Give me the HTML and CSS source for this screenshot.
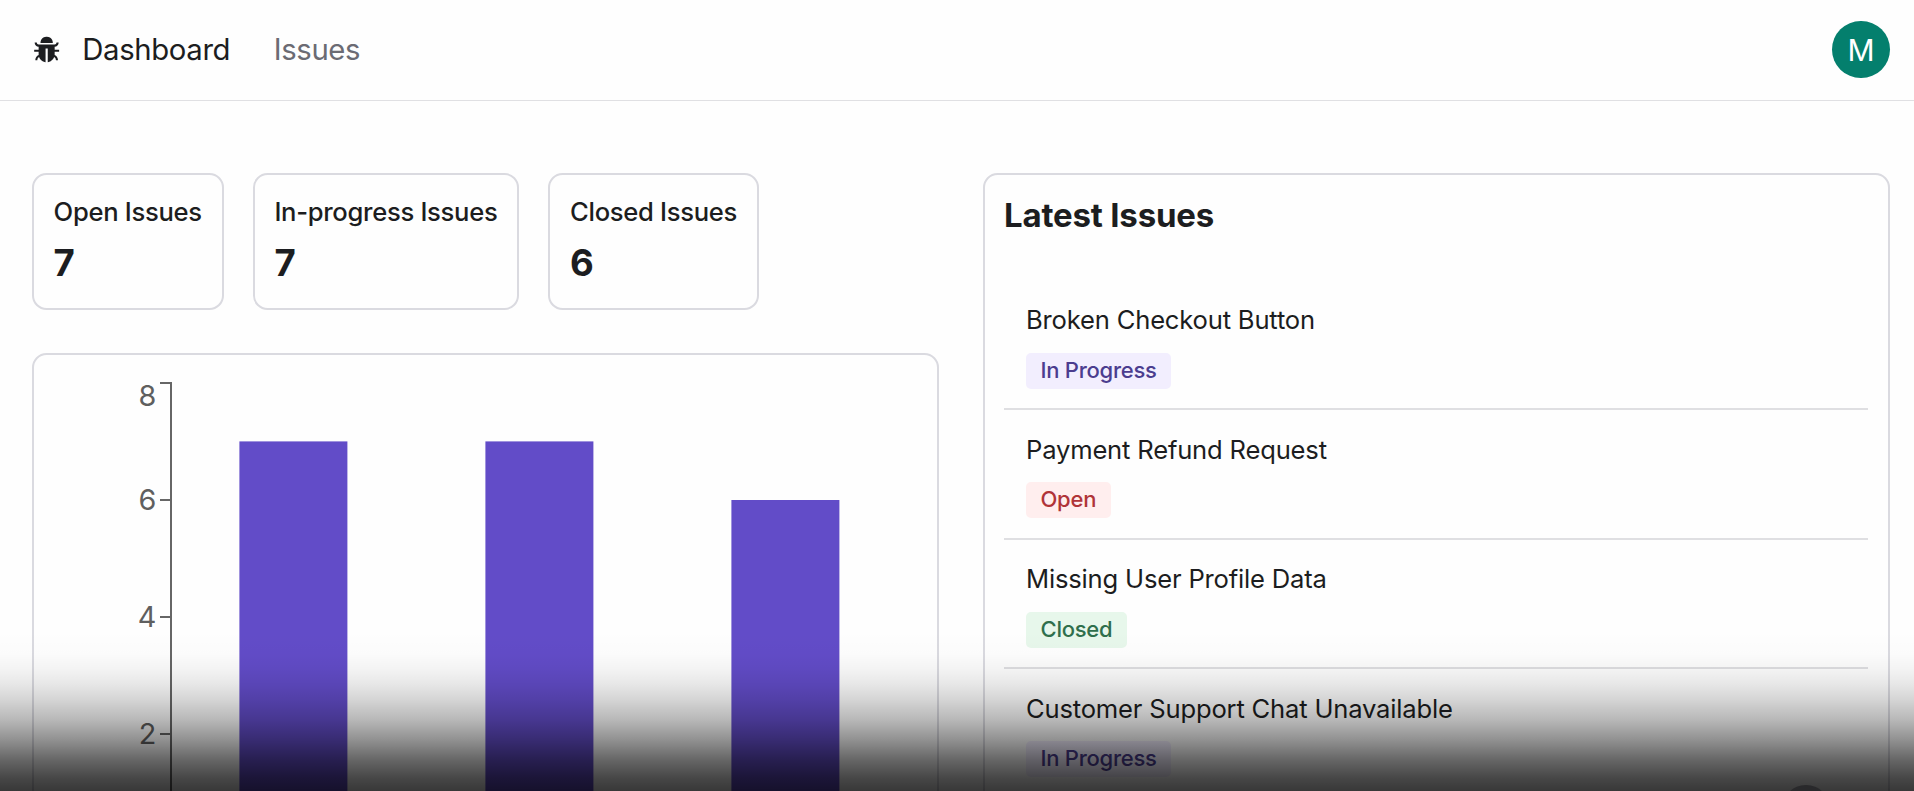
FILE: index.html
```html
<!DOCTYPE html>
<html lang="en">
<head>
<meta charset="utf-8">
<title>Dashboard</title>
<link rel="stylesheet" href="styles.css">
</head>
<body>
<header class="navbar">
  <nav class="nav">
    <svg class="logo" viewBox="0 0 1024 1024" fill="currentColor" aria-hidden="true">
      <path d="M304 280h416c4.4 0 8-3.6 8-8 0-40-8.8-76.7-25.9-108.1a184.31 184.31 0 0 0-74-74C596.7 72.8 560 64 520 64h-16c-40 0-76.7 8.8-108.1 25.9a184.31 184.31 0 0 0-74 74C304.8 195.3 296 232 296 272c0 4.4 3.6 8 8 8z"/>
      <path d="M940 512H792V412c76.8 0 139-62.2 139-139 0-4.4-3.6-8-8-8h-60c-4.4 0-8 3.6-8 8a63 63 0 0 1-63 63H232a63 63 0 0 1-63-63c0-4.4-3.6-8-8-8h-60c-4.4 0-8 3.6-8 8 0 76.8 62.2 139 139 139v100H84c-4.4 0-8 3.6-8 8v56c0 4.4 3.6 8 8 8h148v96c0 6.5.2 13 .7 19.3C164.1 728.6 116 796.7 116 876c0 4.4 3.6 8 8 8h56c4.4 0 8-3.6 8-8 0-44.2 23.9-82.9 59.6-103.7a273 273 0 0 0 22.7 49c24.3 41.5 59 76.2 100.5 100.5 28.9 16.9 61 28.8 95.3 34.5 4.4 0 8-3.6 8-8V484c0-4.4 3.6-8 8-8h60c4.4 0 8 3.6 8 8v464.2c0 4.4 3.6 8 8 8 34.3-5.7 66.4-17.6 95.3-34.5a281.38 281.38 0 0 0 123.2-149.5A120 120 0 0 1 836 876c0 4.4 3.6 8 8 8h56c4.4 0 8-3.6 8-8 0-79.3-48.1-147.4-116.7-176.7.4-6.4.7-12.8.7-19.3v-96h148c4.4 0 8-3.6 8-8v-56c0-4.4-3.6-8-8-8z"/>
    </svg>
    <a class="nav-link nav-link-active">Dashboard</a>
    <a class="nav-link">Issues</a>
  </nav>
  <div class="avatar">M</div>
</header>
<main class="content">
  <section class="overview">
    <div class="stats">
      <div class="card stat"><span class="stat-label">Open Issues</span><span class="stat-value">7</span></div>
      <div class="card stat"><span class="stat-label">In-progress Issues</span><span class="stat-value">7</span></div>
      <div class="card stat"><span class="stat-label">Closed Issues</span><span class="stat-value">6</span></div>
    </div>
    <div class="card chart-card">
      <svg class="chart" width="903" height="550" viewBox="34 355 903 550">
        <g class="axis">
          <path d="M160 383H171V851M160 500H171M160 617H171M160 734H171"/>
        </g>
        <g class="ticks">
          <text x="156.3" y="405.5">8</text>
          <text x="156.3" y="510">6</text>
          <text x="156.3" y="627">4</text>
          <text x="156.3" y="744">2</text>
        </g>
        <g class="bars">
          <rect x="239.4" y="441.4" width="108" height="410"/>
          <rect x="485.4" y="441.4" width="108" height="410"/>
          <rect x="731.4" y="500" width="108" height="351"/>
        </g>
      </svg>
    </div>
  </section>
  <section class="card latest">
    <h2 class="latest-title">Latest Issues</h2>
    <ul class="issues">
      <li class="issue"><span class="issue-title">Broken Checkout Button</span><span class="badge badge-progress">In Progress</span></li>
      <li class="issue"><span class="issue-title">Payment Refund Request</span><span class="badge badge-open">Open</span></li>
      <li class="issue"><span class="issue-title">Missing User Profile Data</span><span class="badge badge-closed">Closed</span></li>
      <li class="issue"><span class="issue-title">Customer Support Chat Unavailable</span><span class="badge badge-progress">In Progress</span></li>
    </ul>
  </section>
</main>
<div class="shade"></div>
<div class="float-button"></div>
</body>
</html>
```
FILE: styles.css
```css
* { box-sizing: border-box; }
body {
  margin: 0;
  height: 791px;
  overflow: hidden;
  position: relative;
  background: #fefefe;
  color: #1c1d20;
  font-family: Inter, "Liberation Sans", sans-serif;
}
.navbar {
  display: flex;
  align-items: center;
  justify-content: space-between;
  height: 101px;
  padding: 0 24px 0 32px;
  border-bottom: 1px solid #e0e0e3;
}
.nav { display: flex; align-items: center; }
.logo { width: 29.3px; height: 29.3px; margin: 0 21px 1px 0; }
.nav-link { font-size: 29.3px; line-height: 44px; letter-spacing: -.36px; color: #6b6b73; }
.nav-link-active { color: #1c1d20; margin-right: 43.5px; }
.avatar {
  display: flex;
  align-items: center;
  justify-content: center;
  width: 58px;
  height: 57.5px;
  margin-bottom: 1px;
  padding-top: 1px;
  border-radius: 50%;
  background: #047f6d;
  color: #fff;
  font-size: 30px;
  font-weight: 400;
}
.content {
  display: grid;
  grid-template-columns: 1fr 1fr;
  gap: 44px;
  height: 690px;
  overflow: hidden;
  padding: 72px 24px 0 32px;
}
.card { border: 2px solid #dadae0; border-radius: 14.5px; }
.overview { display: flex; flex-direction: column; gap: 43px; }
.stats { display: flex; gap: 29px; }
.stat { display: flex; flex-direction: column; height: 137px; padding: 18px 20.1px 18px 19.6px; }
.stat-label { font-size: 25.6px; font-weight: 500; line-height: 37px; letter-spacing: -.3px; }
.stat-value { font-size: 36.6px; font-weight: 700; line-height: 44px; margin-top: 11px; }
.chart-card { height: 554px; }
.chart { display: block; }
.axis { fill: none; stroke: #666; stroke-width: 2; }
.ticks { fill: #5f5f5f; font-size: 28.8px; text-anchor: end; }
.bars { fill: #624cc8; }
.latest { height: 735px; padding: 18px 20px 0 19px; }
.latest-title { margin: 0 0 42px; font-size: 33px; font-weight: 700; line-height: 44px; letter-spacing: -.19px; }
.issues { margin: 0; padding: 1.7px 0 0; list-style: none; }
.issue {
  display: flex;
  flex-direction: column;
  align-items: flex-start;
  height: 129.5px;
  padding: 20.4px 22px 0;
  border-bottom: 2px solid #dfdfe2;
}
.issue-title { font-size: 25.6px; line-height: 37px; margin-bottom: 14.7px; letter-spacing: -.19px; }
.badge {
  height: 36px;
  padding: 0 14.5px;
  border-radius: 5px;
  font-size: 22px;
  font-weight: 500;
  line-height: 35.6px;
  letter-spacing: -.25px;
}
.badge-progress { background: #f2eefe; color: #4b3d8f; }
.badge-open { background: #ffeeee; color: #b03438; }
.badge-closed { background: #e7f7eb; color: #2f6f4c; }
.shade {
  position: absolute;
  inset: 631px 0 0;
  background: linear-gradient(to bottom,
    rgba(0, 0, 0, 0) 0,
    rgba(0, 0, 0, .01) 23px,
    rgba(0, 0, 0, .04) 37px,
    rgba(0, 0, 0, .09) 53px,
    rgba(0, 0, 0, .165) 69px,
    rgba(0, 0, 0, .28) 89px,
    rgba(0, 0, 0, .43) 109px,
    rgba(0, 0, 0, .6) 129px,
    rgba(0, 0, 0, .72) 147px,
    rgba(0, 0, 0, .78) 160px);
}
.float-button {
  position: absolute;
  left: 1782px;
  top: 785px;
  width: 48px;
  height: 6px;
  overflow: hidden;
}
.float-button::before {
  content: "";
  display: block;
  height: 48px;
  border-radius: 50%;
  background: #29292b;
}
```
